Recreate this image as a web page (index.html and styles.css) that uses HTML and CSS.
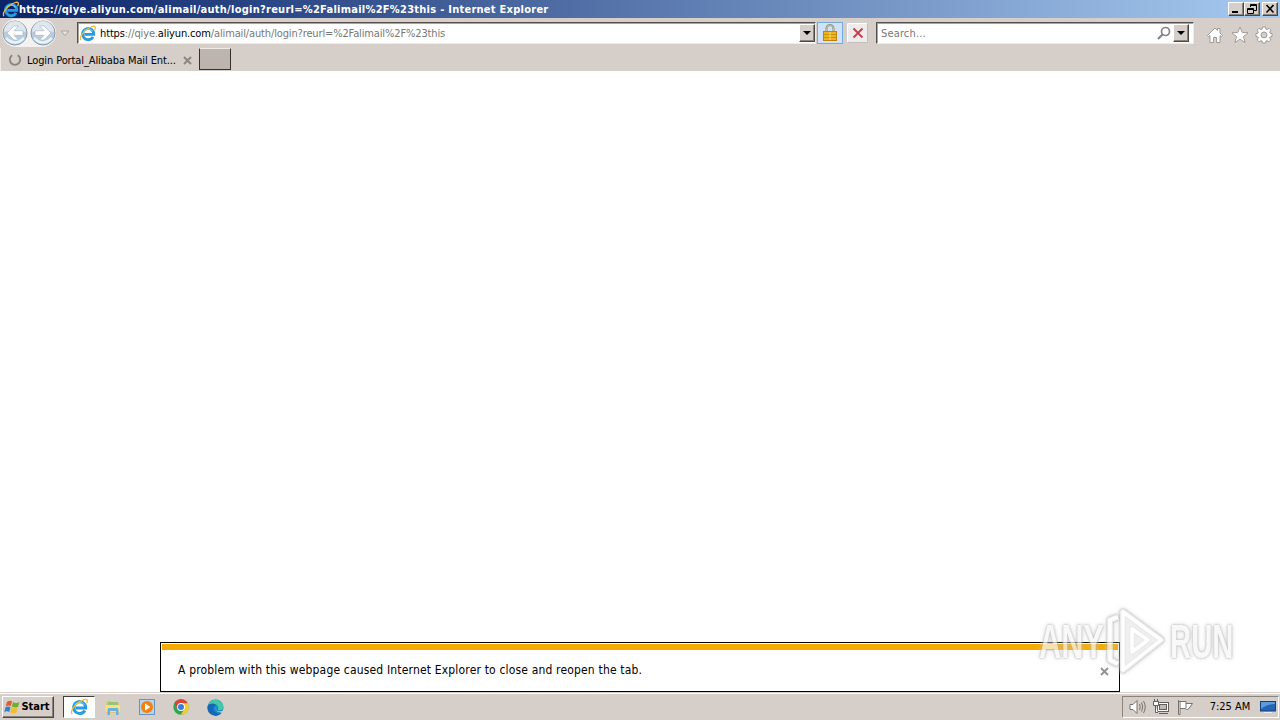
FILE: index.html
```html
<!DOCTYPE html>
<html lang="en">
<head>
  <meta charset="UTF-8" />
  <title>Login Portal_Alibaba Mail Enterprise</title>
  <link rel="stylesheet" href="styles.css">
</head>
<body>
  <svg class="defs" width="0" height="0">
    <symbol id="ie" viewBox="0 0 16 16">
      <path d="M13.200 11.200A5.300 5.300 0 1 1 13.900 8.800H5" fill="none" stroke="#299be2" stroke-width="2.700"/>
      <path d="M4.200 6.500A5 5 0 0 1 12.800 6" fill="none" stroke="#75cdf5" stroke-width="1"/>
      <path d="M2 14.200C-.2 12.500 3.500 6.500 8 3.700C11 1.600 14.500.3 15.300 1.900C15.700 2.700 15.200 3.900 14.600 4.800" fill="none" stroke="#e9be3a" stroke-width="1.200"/>
    </symbol>
    <symbol id="arrow" viewBox="0 0 26 26">
      <circle cx="13" cy="13" r="12" fill="#bccbd9" stroke="#8799aa"/>
      <path d="M2 12A11 11 0 0 1 24 12Q13 9 2 12" fill="#dfe6ed"/>
      <path d="M4 18Q13 27 22 18" fill="none" stroke="#e2f5fc" stroke-width="2.500"/>
      <path d="M12 6L5 13L12 20H16.500L12 15.300H21V10.700H12L16.500 6Z" fill="#fff" stroke="#a3b4c5" stroke-width=".6"/>
    </symbol>
  </svg>

  <header class="titlebar">
    <svg class="title-icon" width="17" height="17"><use href="#ie"/></svg>
    <span class="title">https://qiye.aliyun.com/alimail/auth/login?reurl=%2Falimail%2F%23this - Internet Explorer</span>
    <div class="win-buttons">
      <button><svg width="12" height="10"><path d="M2 8H8" stroke="#000" stroke-width="2"/></svg></button>
      <button><svg width="12" height="10" fill="none" stroke="#000"><path d="M4.500 3V.5H10.500V6.500H8M4 1.500H11M1.500 4.500H7.500V9.500H1.500ZM1 5.500H8"/></svg></button>
      <button class="win-close"><svg width="12" height="10"><path d="M2.500 1L9.500 8.500M9.500 1L2.500 8.500" stroke="#000" stroke-width="1.600"/></svg></button>
    </div>
  </header>

  <nav class="toolbar">
    <div class="history">
      <svg width="26" height="26"><use href="#arrow"/></svg>
      <svg class="forward" width="26" height="26"><use href="#arrow"/></svg>
    </div>
    <svg class="recent" width="10" height="7"><path d="M1 1H9L5 5.500Z" fill="#e7e3df" stroke="#aaa5a1"/></svg>
    <div class="field address">
      <svg width="17" height="17"><use href="#ie"/></svg>
      <span class="url"><b>https</b>://qiye.<b>aliyun.com</b>/alimail/auth/login?reurl=%2Falimail%2F%23this</span>
      <button class="drop"><i></i></button>
    </div>
    <button class="lock">
      <svg width="14" height="18"><path d="M3.500 8V4.500A3.500 3.500 0 0 1 10.500 4.500V8" fill="none" stroke="#8f8a6c" stroke-width="2"/><path d="M3.500 8V4.500A3.500 3.500 0 0 1 10.500 4.500V8" fill="none" stroke="#d8d4bd" stroke-width=".7"/><rect x=".5" y="7.500" width="13" height="9" fill="#eeb51c" stroke="#bc8511"/><path d="M1 10.500H13M1 13.500H13" stroke="#c98f12"/><path d="M7 8V16" stroke="#ffdc65"/></svg>
    </button>
    <button class="stop">
      <svg width="12" height="12"><path d="M1.500 1.500L10.500 10.500M10.500 1.500L1.500 10.500" stroke="#c64350" stroke-width="2"/></svg>
    </button>
    <div class="field search">
      <span class="placeholder">Search...</span>
      <svg width="14" height="14" fill="none" stroke="#858585"><circle cx="8.500" cy="5.500" r="4" stroke-width="1.700"/><path d="M5.500 8.500L1 13" stroke-width="2.200"/></svg>
      <button class="drop"><i></i></button>
    </div>
    <div class="commands">
      <svg width="18" height="18"><path d="M1.500 9.500L9 2L11.500 4.500V2.500H14V7L16.500 9.500L15.300 10.700L14 9.500V16.500H10.500V11.500H7.500V16.500H4V9.500L2.700 10.700Z"/></svg>
      <svg width="18" height="18"><path d="M9 1L11.200 6.400L17 6.800L12.500 10.500L14 16.500L9 13.200L4 16.500L5.500 10.500L1 6.800L6.800 6.400Z"/></svg>
      <svg width="18" height="18"><path fill-rule="evenodd" d="M7.500 1H10.500L11 3.200L12 3.600L14 2.300L15.900 4.200L14.600 6.200L15 7.200L17 7.600V10.500L15 11L14.600 12L15.900 14L14 15.800L12 14.600L11 15L10.500 17H7.500L7 15L6 14.600L4 15.800L2.100 14L3.400 12L3 11L1 10.500V7.600L3 7.200L3.400 6.200L2.100 4.200L4 2.300L6 3.600L7 3.200ZM9 6A3 3 0 1 0 9 12A3 3 0 1 0 9 6Z"/></svg>
    </div>
  </nav>

  <div class="tabs">
    <div class="tab">
      <svg width="14" height="14"><path d="M4.200 2.300A5.200 5.200 0 1 0 9.800 2.300" fill="none" stroke="#858585" stroke-width="1.900"/></svg>
      <span class="tab-title">Login Portal_Alibaba Mail Ent...</span>
      <svg width="9" height="9"><path d="M1 1L8 8M8 1L1 8" stroke="#8a8583" stroke-width="2"/></svg>
    </div>
    <div class="new-tab"></div>
  </div>

  <main class="page">
    <div class="notice">
      <div class="stripe"></div>
      <div class="notice-body">
        <span class="message">A problem with this webpage caused Internet Explorer to close and reopen the tab.</span>
        <svg width="9" height="9"><path d="M1 1L8 8M8 1L1 8" stroke="#919191" stroke-width="1.800"/></svg>
      </div>
    </div>
    <div class="watermark">
      <span class="any">ANY</span>
      <svg width="60" height="68" fill="none" stroke-linejoin="round">
        <path d="M17 6L55 33L17 62Z" fill="#e9e9e9"/>
        <g stroke="#e2e2e2" stroke-width="6"><path d="M17 5L55 33L17 63ZM26 22L42 33L26 45ZM12 10L4 13V53L12 57"/></g>
        <g stroke="#fff" stroke-width="3.500"><path d="M17 5L55 33L17 63ZM26 22L42 33L26 45ZM12 10L4 13V53L12 57"/></g>
      </svg>
      <span class="run">RUN</span>
    </div>
  </main>

  <footer class="taskbar">
    <button class="start">
      <svg width="17" height="16"><path d="M3 3Q6 1 8 2.500L6.800 7Q4.500 6 1.800 7.300Z" fill="#e65b25"/><path d="M9 3Q12 5 15.500 3L14 8Q11 9 7.800 7.400Z" fill="#73af2e"/><path d="M1.500 8.300Q4 7 6.500 8.200L5.300 13Q3 11.500.3 13Z" fill="#3681cf"/><path d="M7.500 8.600Q10.500 10 13.700 9L12.400 13.600Q9.500 15 6.300 13.300Z" fill="#f4be26"/></svg>
      <span>Start</span>
    </button>
    <div class="apps">
      <div class="app active"><svg width="18" height="18"><use href="#ie"/></svg></div>
      <div class="app">
        <svg width="18" height="17"><path d="M2 2H7L8 4H15V14H2Z" fill="#e6c566"/><path d="M4 3H14V7H4Z" fill="#95c66e"/><path d="M1.500 6H16V13H1.500Z" fill="#f5df91"/><path d="M3.500 16V11Q3.500 9 5 9H13Q14.500 9 14.500 11V16H12V12H6V16Z" fill="#69b2df"/></svg>
      </div>
      <div class="app">
        <svg width="17" height="17"><rect x=".5" y=".5" width="15" height="15" fill="#b7d3ed" stroke="#6695c3"/><circle cx="8" cy="8" r="6" fill="#f4820c"/><path d="M6 4.500L11.500 8L6 11.500Z" fill="#fff"/></svg>
      </div>
      <div class="app">
        <svg width="16" height="16"><circle cx="8" cy="8" r="7.700" fill="#35a350"/><path d="M1.300 4.100A7.700 7.700 0 0 1 14.700 4.200H8L4.700 10Z" fill="#dd4434"/><path d="M8 4.200H14.700A7.700 7.700 0 0 1 7.800 15.700L11.300 10Z" fill="#f8cc30"/><circle cx="8" cy="8" r="3.900" fill="#fff"/><circle cx="8" cy="8" r="3" fill="#367dde"/></svg>
      </div>
      <div class="app">
        <svg width="17" height="17"><circle cx="8.500" cy="8.500" r="8" fill="#168acb"/><path d="M1 6A8 8 0 0 1 16.500 9Q15.500 12 11 11Q12 6.500 8 5Q4 4 1 6" fill="#45c7a8"/><path d="M1 6Q6 3 9 6Q5 8 7 12Q9.500 15.500 14.500 14A8 8 0 0 1 .5 8Z" fill="#1767b5"/><path d="M9 7.500Q7.500 10.500 10.500 12Q13 13 16 11.500L17 14Q13 13.800 10.500 12.500Q8 11 9 7.500" fill="#d6cec8"/></svg>
      </div>
    </div>
    <div class="tray">
      <svg width="17" height="16" fill="#fff" stroke="#77726e"><path d="M1 5.500H4L8 1.500V14.500L4 10.500H1Z"/><path d="M10.500 5Q12 8 10.500 11M12.500 3.500Q15 8 12.500 12.500M14.500 2Q18 8 14.500 14" fill="none"/></svg>
      <svg class="net" width="17" height="16" fill="#fff" stroke="#625e5b"><rect x="4.500" y="3.500" width="11" height="9"/><rect x="6.500" y="5.500" width="7" height="5" fill="#bdbab7"/><path d="M6 14.500H15M.5 2.500H5.500V6.500H.5ZM1.500 0V2M4.500 0V2M2.500 7V13.500H5"/></svg>
      <svg class="flag" width="17" height="16" fill="#fff" stroke="#77726e"><path d="M1.500 1V15.500H3V9.500H8Q11 12 13 8L15.500 4.500H9V2.500H1.500"/><path d="M3 2.500V9.500M9 4.500V9"/></svg>
      <span class="clock">7:25 AM</span>
      <svg width="16" height="14"><rect x=".5" y="1.500" width="15" height="9.500" fill="#2364b5" stroke="#183f78"/><path d="M1 2H15V4Q7 4 1 9Z" fill="#5a9ae1"/><path d="M4 12.500H12" stroke="#e7edf2"/></svg>
    </div>
  </footer>
</body>
</html>
```
FILE: styles.css
```css
* {
  box-sizing: border-box;
}
body {
  margin: 0;
  height: 720px;
  overflow: hidden;
  display: flex;
  flex-direction: column;
  background: #fff;
  color: #000;
  font: 11px/14px "DejaVu Sans Condensed", "DejaVu Sans", sans-serif;
  font-stretch: condensed;
  white-space: nowrap;
}
svg {
  display: block;
  flex: none;
}
button {
  padding: 0;
  border: 1px solid;
  border-color: #fff #4b4743 #4b4743 #fff;
  background: #d6cec8;
  box-shadow: inset -1px -1px #8a8480;
  color: #000;
  font: inherit;
  display: flex;
  align-items: center;
  justify-content: center;
}
.defs {
  position: absolute;
}
.titlebar {
  height: 18px;
  flex: none;
  padding: 0 2px;
  display: flex;
  align-items: center;
  background: linear-gradient(90deg, #0b2469, #a6caf0);
}
.title {
  padding-top: 1px;
  color: #fff;
  font-weight: bold;
  letter-spacing: 0.26px;
}
.win-buttons {
  display: flex;
  margin-left: auto;
}
.win-buttons button {
  width: 16px;
  height: 14px;
}
.win-buttons .win-close {
  margin-left: 2px;
}
.toolbar {
  height: 30px;
  flex: none;
  padding-left: 2px;
  display: flex;
  align-items: center;
  background: #d6cec8;
}
.history {
  display: flex;
  gap: 2px;
  padding: 1px 0;
  background: #f4f2f0;
  border-radius: 14px;
}
.forward {
  transform: scaleX(-1);
}
.recent {
  margin: 0 7px 0 4px;
}
.field {
  height: 22px;
  display: flex;
  align-items: center;
  background: #fff;
  border: 1px solid;
  border-color: #55504b #eeeae6 #eeeae6 #55504b;
  box-shadow: inset 1px 1px #aaa39d;
  color: #777;
}
.address {
  width: 739px;
  padding-left: 1px;
}
.url {
  margin-left: 4px;
  padding-top: 1px;
  letter-spacing: -0.135px;
}
.url b {
  color: #000;
  font-weight: normal;
}
.drop {
  width: 16px;
  height: 18px;
  margin-left: auto;
}
.drop i {
  border: 4px solid transparent;
  border-top-color: #000;
  border-bottom: 0;
}
.lock {
  width: 26px;
  height: 22px;
  margin-left: 1px;
  background: #cfe2f8;
  border-color: #75aadd;
  box-shadow: none;
}
.stop {
  width: 21px;
  height: 20px;
  margin-left: 4px;
  background: #eeebed;
  border-color: #fff #c3bcbb #c3bcbb #fff;
  border-radius: 2px;
  box-shadow: none;
}
.search {
  width: 318px;
  margin-left: 8px;
  padding: 0 4px;
}
.placeholder {
  flex: 1;
  padding-top: 1px;
  letter-spacing: 0.15px;
}
.search .drop {
  margin-left: 2px;
}
.commands {
  display: flex;
  gap: 6.5px;
  margin: 3px 0 0 12px;
  fill: #fff;
  stroke: #8e8a87;
  stroke-width: 0.8;
}
.tabs {
  height: 23px;
  flex: none;
  display: flex;
  background: #d6cec8;
}
.tab {
  width: 198px;
  padding: 1px 6px 0 7px;
  display: flex;
  align-items: center;
  border-left: 1px solid #eeeae6;
}
.tab-title {
  flex: 1;
  margin-left: 5px;
  padding-top: 1px;
  letter-spacing: -0.11px;
}
.new-tab {
  width: 32px;
  height: 22px;
  margin-left: 1px;
  background: #bdb4ae;
  border: 1px solid;
  border-color: #eeeae6 #35302d #35302d #35302d;
}
.page {
  height: 621px;
  flex: none;
  position: relative;
  display: flex;
  align-items: flex-end;
  justify-content: center;
}
.notice {
  width: 960px;
  height: 50px;
  border: 1px solid #000;
  padding: 1px;
}
.stripe {
  height: 6px;
  background: #f7ab00;
}
.notice-body {
  height: 40px;
  padding: 0 9px 0 16px;
  display: flex;
  align-items: center;
  justify-content: space-between;
}
.notice-body svg {
  margin-top: 2px;
}
.message {
  font-size: 12px;
  letter-spacing: 0.17px;
}
/* translucent logo laid over the page corner */
.watermark {
  position: absolute;
  left: 1039px;
  top: 535px;
  display: flex;
  align-items: center;
  opacity: 0.72;
  color: #f6f6f6;
  font: bold 48px/68px "Liberation Sans", sans-serif;
  filter: drop-shadow(0 0 1px #999) drop-shadow(0 0 2px #ccc);
}
.watermark span {
  width: 67px;
  padding-top: 2px;
  transform: scaleX(0.64);
  transform-origin: left;
}
.watermark .run {
  margin-left: 4px;
  transform: scaleX(0.61);
}
.taskbar {
  height: 28px;
  flex: none;
  padding: 1px 1px 0 2px;
  display: flex;
  align-items: center;
  background: #d6cec8;
  border-top: 1px solid #d6cec8;
  box-shadow: inset 0 1px #fff;
}
.start {
  width: 52px;
  height: 22px;
  padding-right: 2px;
  font-weight: bold;
}
.apps {
  display: flex;
  margin-left: 9px;
}
.app {
  width: 32px;
  height: 22px;
  margin-right: 2px;
  display: flex;
  align-items: center;
  justify-content: center;
}
.active {
  background: #fff;
  border: 1px solid;
  border-color: #45403c #fff #fff #45403c;
}
.tray {
  width: 157px;
  height: 22px;
  margin-left: auto;
  padding: 0 2px 0 6px;
  display: flex;
  align-items: center;
  border: 1px solid;
  border-color: #8a8480 #fff #fff #8a8480;
}
.net {
  margin-left: 7px;
}
.flag {
  margin-left: 7px;
}
.clock {
  margin: 0 auto;
  padding-left: 6px;
}
```
